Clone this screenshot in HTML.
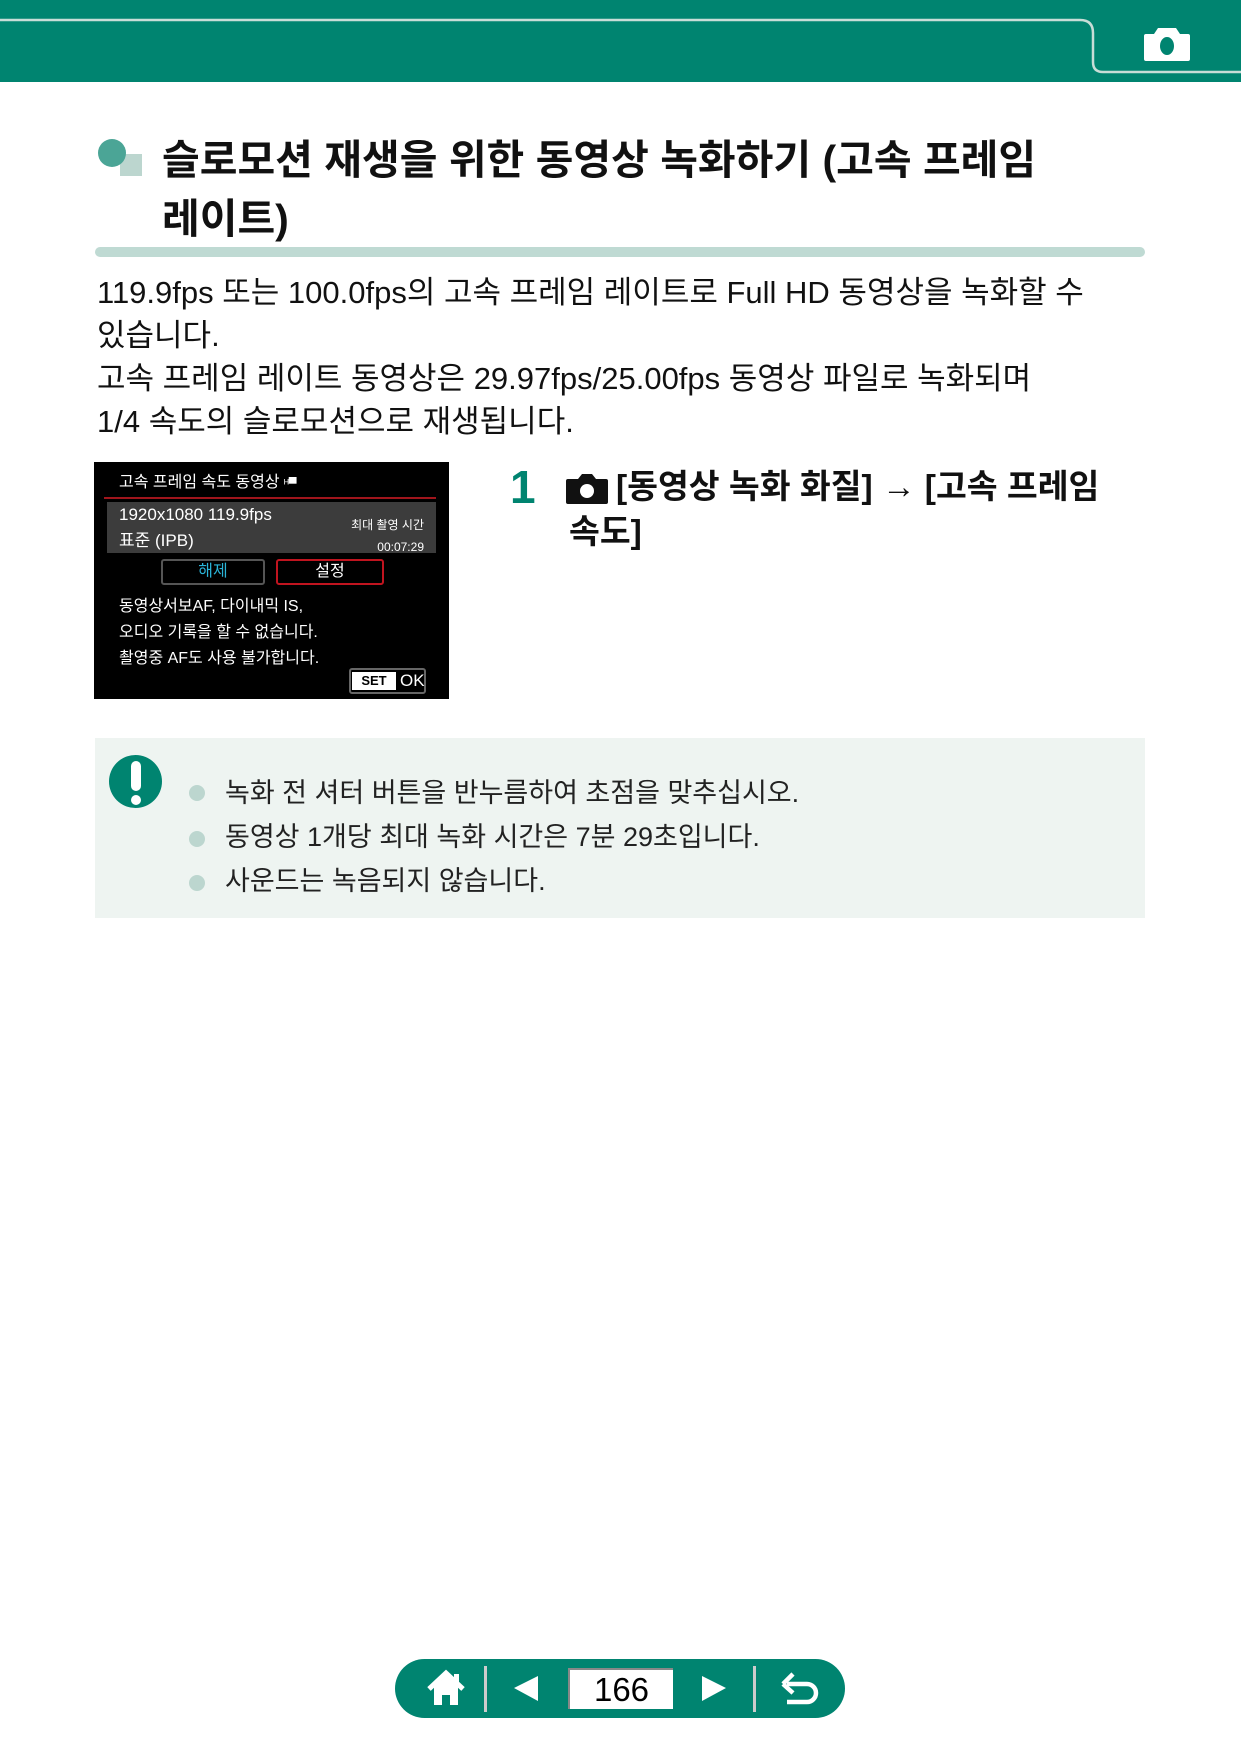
<!DOCTYPE html>
<html><head><meta charset="utf-8"><style>
*{margin:0;padding:0;box-sizing:border-box}
body{width:1241px;height:1749px;background:#fff;position:relative;overflow:hidden;font-family:"Liberation Sans","Noto Sans CJK KR",sans-serif;color:#111}
.a{position:absolute;white-space:nowrap}
.p{font-size:31px;line-height:43px}
.scr{position:absolute;left:94px;top:462px;width:355px;height:237px;background:#000;color:#fff;font-size:16px}
.scr .a{line-height:20px}
.li{font-size:27px;line-height:30px;color:#222}
.dot{position:absolute;width:16px;height:16px;border-radius:50%;background:#bcd6cf}
</style></head><body>
<svg class="a" style="left:0;top:0" width="1241" height="84">
<rect x="0" y="0" width="1241" height="82" fill="#008470"/>
<path d="M0 20 H1080 Q1093 20 1093 33 V62 Q1093 72 1103 72 H1241" fill="none" stroke="#c8ddd7" stroke-width="2.5"/>
<path d="M1146 34 h8 l4 -6 h18 l4 6 h8 a2 2 0 0 1 2 2 v23 a2 2 0 0 1 -2 2 h-42 a2 2 0 0 1 -2 -2 v-23 a2 2 0 0 1 2 -2z" fill="#fff"/>
<ellipse cx="1167" cy="46" rx="7" ry="9" fill="#008470"/>
</svg>
<div class="a" style="left:98px;top:139px;width:28px;height:28px;border-radius:50%;background:#4ba596"></div>
<div class="a" style="left:120px;top:154px;width:22px;height:22px;background:#bcd6cf;z-index:-1"></div>
<div class="a" style="left:162px;top:131px;font-size:41px;font-weight:bold;line-height:59px">슬로모션 재생을 위한 동영상 녹화하기 (고속 프레임<br>레이트)</div>
<div class="a" style="left:95px;top:247px;width:1050px;height:10px;border-radius:5px;background:#bfdad3"></div>
<div class="a p" style="left:97px;top:271px">119.9fps 또는 100.0fps의 고속 프레임 레이트로 Full HD 동영상을 녹화할 수<br>있습니다.<br>고속 프레임 레이트 동영상은 29.97fps/25.00fps 동영상 파일로 녹화되며<br>1/4 속도의 슬로모션으로 재생됩니다.</div>
<div class="scr">
<div class="a" style="left:25px;top:11px">고속 프레임 속도 동영상 <span style="font-size:11px">ᴴ▀</span></div>
<div class="a" style="left:10px;top:35px;width:332px;height:2px;background:#a0151c"></div>
<div class="a" style="left:13px;top:40px;width:329px;height:51px;background:#3c3c3c"></div>
<div class="a" style="left:25px;top:43px;font-size:17px">1920x1080 119.9fps</div>
<div class="a" style="left:25px;top:69px;font-size:17px">표준 (IPB)</div>
<div class="a" style="right:25px;top:53px;font-size:12px;text-align:right">최대 촬영 시간</div>
<div class="a" style="right:25px;top:75px;font-size:12px">00:07:29</div>
<div class="a" style="left:67px;top:97px;width:104px;height:26px;border:2px solid #555;border-radius:3px;text-align:center;color:#2ab4d8;line-height:22px">해제</div>
<div class="a" style="left:182px;top:97px;width:108px;height:26px;border:2px solid #c0141f;border-radius:3px;text-align:center;line-height:22px">설정</div>
<div class="a" style="left:25px;top:132px;line-height:26px">동영상서보AF, 다이내믹 IS,<br>오디오 기록을 할 수 없습니다.<br>촬영중 AF도 사용 불가합니다.</div>
<div class="a" style="left:255px;top:206px;width:77px;height:26px;border:2px solid #666;border-radius:3px"></div>
<div class="a" style="left:258px;top:210px;width:44px;height:18px;background:#fff;color:#000;font-size:13px;font-weight:bold;text-align:center;line-height:18px">SET</div>
<div class="a" style="left:306px;top:209px;font-size:17px">OK</div>
</div>
<div class="a" style="left:510px;top:462px;font-size:46px;font-weight:bold;color:#008470;line-height:50px">1</div>
<svg class="a" style="left:566px;top:473px" width="42" height="32"><path d="M2 6 h10 l4 -5 h10 l4 5 h10 a2 2 0 0 1 2 2 v21 a2 2 0 0 1 -2 2 h-38 a2 2 0 0 1 -2 -2 v-21 a2 2 0 0 1 2 -2z" fill="#111"/><circle cx="21" cy="18" r="7" fill="#fff"/></svg>
<div class="a" style="left:616px;top:465px;font-size:33.5px;font-weight:bold;line-height:45px">[동영상 녹화 화질] <span style="font-weight:normal">→</span> [고속 프레임</div>
<div class="a" style="left:569px;top:510px;font-size:33.5px;font-weight:bold;line-height:45px">속도]</div>
<div class="a" style="left:95px;top:738px;width:1050px;height:180px;background:#eef4f1"></div>
<div class="a" style="left:109px;top:755px;width:53px;height:53px;border-radius:50%;background:#008470"></div>
<div class="a" style="left:131px;top:761px;width:10px;height:30px;border-radius:5px;background:#fff"></div>
<div class="a" style="left:131px;top:795px;width:10px;height:10px;border-radius:50%;background:#fff"></div>
<div class="dot" style="left:189px;top:785px"></div>
<div class="dot" style="left:189px;top:831px"></div>
<div class="dot" style="left:189px;top:875px"></div>
<div class="a li" style="left:225px;top:778px">녹화 전 셔터 버튼을 반누름하여 초점을 맞추십시오.</div>
<div class="a li" style="left:225px;top:822px">동영상 1개당 최대 녹화 시간은 7분 29초입니다.</div>
<div class="a li" style="left:225px;top:866px">사운드는 녹음되지 않습니다.</div>
<div class="a" style="left:395px;top:1659px;width:450px;height:59px;border-radius:30px;background:#008470"></div>
<svg class="a" style="left:395px;top:1659px" width="450" height="59">
<path d="M34 30 L51 14 L68 30" fill="none" stroke="#fff" stroke-width="5"/>
<path d="M39 28 L51 17 L63 28 V46 H55 V36 H47 V46 H39z" fill="#fff"/>
<rect x="59" y="15" width="5" height="9" fill="#fff"/>
<rect x="89" y="7" width="3" height="46" fill="#ccc"/>
<path d="M119 29 L143 17 V42z" fill="#fff"/>
<path d="M307 17 L331 29 L307 42z" fill="#fff"/>
<rect x="358" y="7" width="3" height="46" fill="#ccc"/>
<path d="M392 43 H412 A9 9 0 0 0 412 25 H392" fill="none" stroke="#fff" stroke-width="4.5"/>
<path d="M388 25 L398 15 M388 25 L398 34" stroke="#fff" stroke-width="4.5" fill="none"/>
</svg>
<div class="a" style="left:568px;top:1668px;width:105px;height:41px;background:#fff;border-top:2px solid #888;border-left:2px solid #888;font-size:33px;text-align:center;line-height:40px;color:#000">166</div>
</body></html>
